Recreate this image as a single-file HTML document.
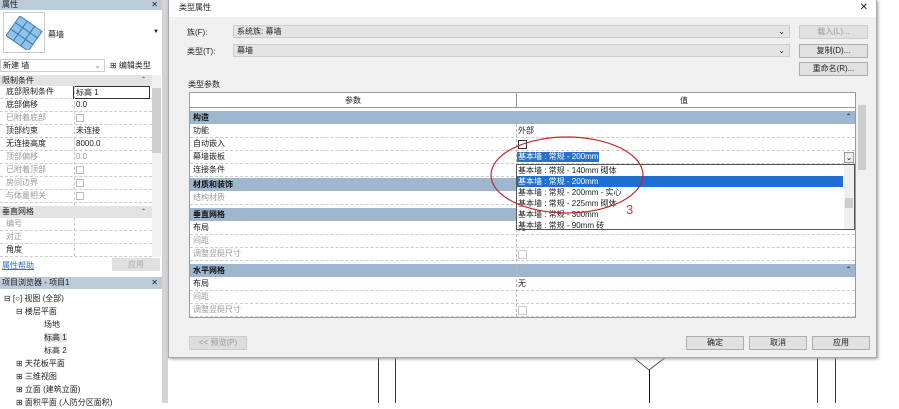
<!DOCTYPE html>
<html><head><meta charset="utf-8"><style>
*{margin:0;padding:0;box-sizing:border-box}
body{width:899px;height:403px;overflow:hidden;background:#fff;font-family:"Liberation Sans","Noto Sans CJK SC",sans-serif;font-size:8px;color:#222;position:relative}
.a{position:absolute}
.row{position:absolute;height:13px;line-height:12px;border-bottom:1px dashed #ccc;white-space:nowrap}
.sec{position:absolute;background:#9fb6cf;font-weight:bold;line-height:13px;height:13px;padding-left:3px;color:#111}
.g{color:#999}
.btn{position:absolute;background:#e1e1e1;border:1px solid #adadad;text-align:center;line-height:12px}
</style></head><body>
<!-- left panel -->
<div class="a" style="left:0;top:0;width:162px;height:403px;background:#fff"></div>
<div class="a" style="left:162px;top:0;width:6px;height:403px;background:#d4d4d4"></div>
<div class="a" style="left:0;top:0;width:162px;height:10px;background:#bccbd9;line-height:10px;padding-left:2px">属性<span style="position:absolute;right:4px">✕</span></div>
<div class="a" style="left:3px;top:12px;width:42px;height:41px;border:1px solid #ccc;background:#fff"></div>
<svg class="a" style="left:6px;top:16px" width="38" height="34"><g transform="rotate(35 19 17)" fill="#8fc3ea" stroke="#3b7db5" stroke-width="1"><rect x="5" y="6" width="9" height="8"/><rect x="14" y="6" width="9" height="8"/><rect x="23" y="6" width="9" height="8"/><rect x="5" y="14" width="9" height="8"/><rect x="14" y="14" width="9" height="8"/><rect x="23" y="14" width="9" height="8"/><rect x="5" y="22" width="9" height="8"/><rect x="14" y="22" width="9" height="8"/><rect x="23" y="22" width="9" height="8"/></g></svg>
<div class="a" style="left:48px;top:29px">幕墙</div>
<div class="a" style="left:153px;top:29px;font-size:6px">▼</div>
<div class="a" style="left:0;top:59px;width:105px;height:13px;border:1px solid #ccc;line-height:11px;padding-left:2px">新建 墙<span style="position:absolute;right:3px;color:#888">⌄</span></div>
<div class="a" style="left:110px;top:60px;line-height:11px">⊞ 编辑类型</div>
<div class="a" style="left:0;top:75px;width:152px;height:11px;background:#e3e3e3;line-height:11px;padding-left:2px">限制条件<span style="position:absolute;right:6px;font-size:6px">⌃</span></div>
<div class="a" style="left:152px;top:75px;width:9px;height:182px;background:#f0f0f0"></div>
<div class="a" style="left:152px;top:88px;width:9px;height:65px;background:#cdcdcd"></div>
<div class="a" style="left:0;top:86px;width:152px">
<div class="row" style="top:0;width:152px;padding-left:6px">底部限制条件<span class="a" style="left:73px;top:0;width:77px;height:13px;border:1px solid #333;padding-left:2px">标高 1</span></div>
<div class="row" style="top:13px;width:152px;padding-left:6px">底部偏移<span class="a" style="left:76px">0.0</span></div>
<div class="row g" style="top:26px;width:152px;padding-left:6px">已附着底部<span class="a" style="left:76px;top:2px;width:8px;height:8px;border:1px solid #bbb"></span></div>
<div class="row" style="top:39px;width:152px;padding-left:6px">顶部约束<span class="a" style="left:76px">未连接</span></div>
<div class="row" style="top:52px;width:152px;padding-left:6px">无连接高度<span class="a" style="left:76px">8000.0</span></div>
<div class="row g" style="top:65px;width:152px;padding-left:6px">顶部偏移<span class="a" style="left:76px">0.0</span></div>
<div class="row g" style="top:78px;width:152px;padding-left:6px">已附着顶部<span class="a" style="left:76px;top:2px;width:8px;height:8px;border:1px solid #bbb"></span></div>
<div class="row g" style="top:91px;width:152px;padding-left:6px">房间边界<span class="a" style="left:76px;top:2px;width:8px;height:8px;border:1px solid #bbb"></span></div>
<div class="row g" style="top:104px;width:152px;padding-left:6px">与体量相关<span class="a" style="left:76px;top:2px;width:8px;height:8px;border:1px solid #bbb"></span></div>
</div>
<div class="a" style="left:74px;top:86px;width:1px;height:170px;border-left:1px dashed #ccc"></div>
<div class="a" style="left:0;top:206px;width:152px;height:12px;background:#e3e3e3;line-height:12px;padding-left:2px">垂直网格<span style="position:absolute;right:6px;font-size:6px">⌃</span></div>
<div class="row g" style="left:0;top:218px;width:152px;padding-left:6px">编号</div>
<div class="row g" style="left:0;top:231px;width:152px;padding-left:6px">对正</div>
<div class="row" style="left:0;top:244px;width:152px;padding-left:6px">角度</div>
<div class="a" style="left:2px;top:260px;color:#2a6fc9;text-decoration:underline">属性帮助</div>
<div class="a" style="left:112px;top:258px;width:48px;height:13px;background:#e0e0e0;color:#aaa;text-align:center;line-height:13px">应用</div>
<div class="a" style="left:0;top:277px;width:162px;height:12px;background:#bccbd9;line-height:12px;padding-left:2px">项目浏览器 - 项目1<span style="position:absolute;right:4px">✕</span></div>
<div class="a" style="left:4px;top:292px;line-height:13px">
<div>⊟ [○] 视图 (全部)</div>
<div style="padding-left:12px">⊟ 楼层平面</div>
<div style="padding-left:40px">场地</div>
<div style="padding-left:40px"><span style="background:#e6e6e6">标高 1</span></div>
<div style="padding-left:40px">标高 2</div>
<div style="padding-left:12px">⊞ 天花板平面</div>
<div style="padding-left:12px">⊞ 三维视图</div>
<div style="padding-left:12px">⊞ 立面 (建筑立面)</div>
<div style="padding-left:12px">⊞ 面积平面 (人防分区面积)</div>
</div>
<!-- background drawing -->
<div class="a" style="left:378px;top:357px;width:1px;height:46px;background:#333"></div>
<div class="a" style="left:395px;top:357px;width:1px;height:46px;background:#333"></div>
<div class="a" style="left:649px;top:370px;width:1px;height:33px;background:#111"></div>
<div class="a" style="left:817px;top:357px;width:1px;height:46px;background:#333"></div>
<div class="a" style="left:835px;top:357px;width:1px;height:46px;background:#333"></div>
<svg class="a" style="left:630px;top:357px" width="40" height="15"><path d="M3 0 L19 13 L36 0" stroke="#333" fill="none" stroke-width="0.8"/></svg>
<!-- dialog -->
<div class="a" style="left:168px;top:0;width:709px;height:358px;background:#f0f0f0;border:1px solid #aaa;box-shadow:1px 1px 3px #999"></div>
<div class="a" style="left:169px;top:0;width:707px;height:17px;background:#fff;line-height:15px;padding-left:10px">类型属性<span style="position:absolute;right:8px;font-size:10px">✕</span></div>
<div class="a" style="left:187px;top:27px">族(F):</div>
<div class="a" style="left:187px;top:46px">类型(T):</div>
<div class="a" style="left:233px;top:25px;width:557px;height:13px;background:#e4e4e4;border:1px solid #ccc;line-height:11px;padding-left:3px">系统族: 幕墙<span style="position:absolute;right:4px">⌄</span></div>
<div class="a" style="left:233px;top:44px;width:557px;height:13px;background:#e4e4e4;border:1px solid #ccc;line-height:11px;padding-left:3px">幕墙<span style="position:absolute;right:4px">⌄</span></div>
<div class="btn" style="left:799px;top:25px;width:69px;height:14px;color:#999;border-color:#ccc">载入(L)...</div>
<div class="btn" style="left:799px;top:44px;width:69px;height:14px">复制(D)...</div>
<div class="btn" style="left:799px;top:62px;width:69px;height:14px">重命名(R)...</div>
<div class="a" style="left:188px;top:79px">类型参数</div>
<div class="a" style="left:189px;top:92px;width:667px;height:226px;background:#fff;border:1px solid #999"></div>
<div class="a" style="left:190px;top:93px;width:665px;height:15px;border-bottom:1px solid #999;line-height:15px"><span class="a" style="left:155px">参数</span><span class="a" style="left:326px;top:0;height:15px;border-left:1px solid #999"></span><span class="a" style="left:490px">值</span></div>
<div class="a" style="left:857px;top:93px;width:10px;height:225px;background:#f0f0f0"></div>
<div class="a" style="left:858px;top:105px;width:8px;height:65px;background:#cdcdcd"></div>
<div class="sec" style="left:190px;top:111px;width:665px">构造<span style="position:absolute;right:4px;font-size:6px">⌃</span></div>
<div class="row" style="left:190px;top:125px;width:665px;padding-left:3px">功能<span class="a" style="left:328px">外部</span></div>
<div class="row" style="left:190px;top:138px;width:665px;padding-left:3px">自动嵌入<span class="a" style="left:328px;top:2px;width:9px;height:9px;border:1px solid #333"></span></div>
<div class="row" style="left:190px;top:151px;width:665px;padding-left:3px">幕墙嵌板<span class="a" style="left:327px;top:1px;background:#2a70c8;color:#fff;line-height:10px;padding:0 1px">基本墙 : 常规 - 200mm</span><span class="a" style="right:1px;top:1px;width:10px;height:11px;border:1px solid #999;background:#eee;text-align:center;line-height:9px">⌄</span></div>
<div class="row" style="left:190px;top:164px;width:665px;padding-left:3px">连接条件</div>
<div class="sec" style="left:190px;top:178px;width:665px">材质和装饰</div>
<div class="row g" style="left:190px;top:192px;width:665px;padding-left:3px">结构材质</div>
<div class="sec" style="left:190px;top:208px;width:665px">垂直网格</div>
<div class="row" style="left:190px;top:222px;width:665px;padding-left:3px">布局<span class="a" style="left:328px">无</span></div>
<div class="row g" style="left:190px;top:235px;width:665px;padding-left:3px">间距</div>
<div class="row g" style="left:190px;top:248px;width:665px;padding-left:3px">调整竖梃尺寸<span class="a" style="left:328px;top:2px;width:9px;height:9px;border:1px solid #ccc"></span></div>
<div class="sec" style="left:190px;top:264px;width:665px">水平网格<span style="position:absolute;right:4px;font-size:6px">⌃</span></div>
<div class="row" style="left:190px;top:278px;width:665px;padding-left:3px">布局<span class="a" style="left:328px">无</span></div>
<div class="row g" style="left:190px;top:291px;width:665px;padding-left:3px">间距</div>
<div class="row g" style="left:190px;top:304px;width:665px;padding-left:3px">调整竖梃尺寸<span class="a" style="left:328px;top:2px;width:9px;height:9px;border:1px solid #ccc"></span></div>
<div class="a" style="left:516px;top:124px;height:193px;border-left:1px dashed #bbb"></div>
<!-- dropdown list -->
<div class="a" style="left:516px;top:164px;width:339px;height:66px;background:#fff;border:1px solid #555;line-height:11px;overflow:hidden">
<div style="padding-left:1px">基本墙 : 常规 - 140mm 砌体</div>
<div style="padding-left:1px;background:#1f6fd0;color:#fff;width:326px">基本墙 : 常规 - 200mm</div>
<div style="padding-left:1px">基本墙 : 常规 - 200mm - 实心</div>
<div style="padding-left:1px">基本墙 : 常规 - 225mm 砌体</div>
<div style="padding-left:1px">基本墙 : 常规 - 300mm</div>
<div style="padding-left:1px">基本墙 : 常规 - 90mm 砖</div>
<div class="a" style="right:0;top:0;width:10px;height:64px;background:#f0f0f0"></div>
<div class="a" style="right:1px;top:33px;width:8px;height:10px;background:#cdcdcd"></div>
</div>
<svg class="a" style="left:0;top:0" width="899" height="403"><ellipse cx="567" cy="175" rx="76" ry="38" fill="none" stroke="#c0282e" stroke-width="1.2"/><text x="626" y="214" fill="#d03a3a" font-size="13" font-family="Liberation Sans">3</text></svg>
<div class="btn" style="left:189px;top:336px;width:58px;height:14px;color:#999;border-color:#ccc;background:#ddd">&lt;&lt; 预览(P)</div>
<div class="btn" style="left:686px;top:336px;width:58px;height:14px">确定</div>
<div class="btn" style="left:749px;top:336px;width:58px;height:14px">取消</div>
<div class="btn" style="left:812px;top:336px;width:58px;height:14px">应用</div>
</body></html>
